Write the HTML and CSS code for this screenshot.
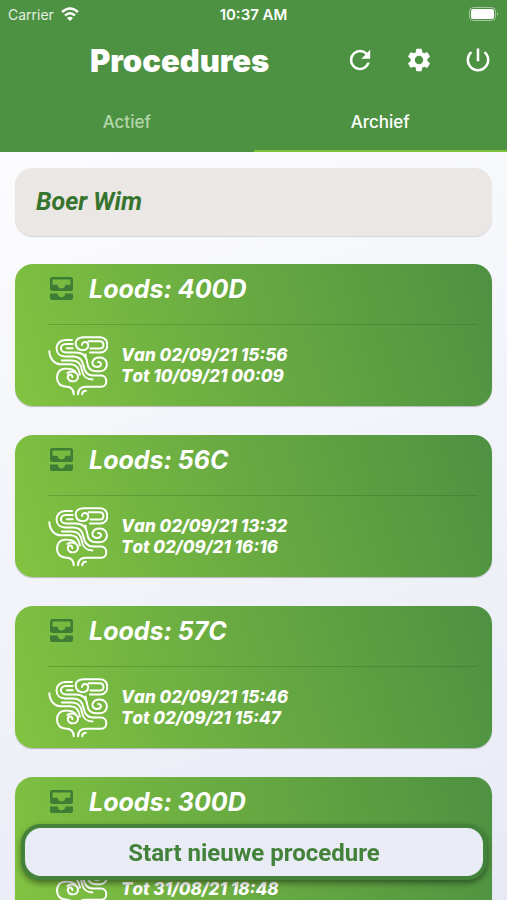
FILE: index.html
```html
<!DOCTYPE html>
<html lang="nl">

<head>
    <meta charset="UTF-8">
    <meta name="viewport" content="width=device-width, initial-scale=1.0">
    <title>Procedures</title>
    <link rel="stylesheet" href="styles.css">
</head>

<body>
    <svg class="sprite" aria-hidden="true">
        <symbol id="inbox" viewBox="3 3 18 18">
            <path fill-rule="evenodd" d="M19 3H5a2 2 0 0 0-2 2v7c0 1.100.9 2 2 2h14a2 2 0 0 0 2-2V5a2 2 0 0 0-2-2zm0 6h-4c0 1.620-1.380 3-3 3s-3-1.380-3-3H5V5h14v4zm-4 7h6v3a2 2 0 0 1-2 2H5a2 2 0 0 1-2-2v-3h6c0 1.660 1.340 3 3 3s3-1.340 3-3z"/>
        </symbol>
        <symbol id="smoke" viewBox="23 31 182 182">
            <g fill="none" stroke="currentColor" stroke-width="6" stroke-linecap="round">
                <path d="M27 77C28 101 43 117 64 117H92C109 117 117 130 120 148"/>
                <path d="M96 43H76C59 43 49 55 49 69C49 84 60 93 75 93H100C119 93 128 104 131 122C134 141 145 151 160 151H184C205 151 205 185 184 185H138C121 185 114 192 114 208"/>
                <path d="M98 55H78C57 55 57 81 78 81H106C129 81 140 94 142 112C144 130 152 138 168 138H180C209 138 209 96 180 96C153 96 151 125 171 125C187 125 188 109 175 110"/>
                <path d="M98 68H80M65 105H95C112 105 124 116 126 136C129 154 143 163 158 163M137 87V94"/>
                <path d="M150 81H182C210 81 210 35 182 35H132C112 35 104 46 108 59C113 79 143 78 145 61C146 46 126 46 126 58"/>
                <path d="M146 47H180C195 47 195 69 180 69H152"/>
                <path d="M106 139C98 129 84 130 75 130C42 130 42 184 75 184C92 184 101 191 101 208"/>
                <path d="M82 143C98 134 114 142 114 155C114 173 83 173 83 156C83 146 96 145 97 156"/>
                <path d="M127 208C127 200 130 197 138 197"/>
            </g>
        </symbol>
    </svg>

    <header class="header">
        <div class="status">
            <span class="carrier">Carrier
                <svg class="wifi" viewBox="0 0 18 14">
                    <path fill="none" stroke="currentColor" stroke-width="2.400" d="M1 5Q9-2 17 5M4 8.500Q9 4 14 8.500"/>
                    <path fill="currentColor" d="M6 11Q9 8.500 12 11L9 14z"/>
                </svg>
            </span>
            <span class="time">10:37 AM</span>
            <svg class="battery" viewBox="0 0 30 14">
                <rect x=".5" y=".5" width="26" height="13" rx="4" fill="none" stroke="currentColor" opacity=".5"/>
                <rect x="2" y="2" width="23" height="10" rx="2.500" fill="currentColor"/>
                <path d="M28 5q2 2 0 4z" fill="currentColor" opacity=".5"/>
            </svg>
        </div>
        <div class="bar">
            <h1>Procedures</h1>
            <div class="actions">
                <button type="button" aria-label="Vernieuwen">
                    <svg viewBox="1 1 22 22"><path d="M17.650 6.350A7.960 7.960 0 0 0 12 4a8 8 0 1 0 7.730 10h-2.080A6 6 0 1 1 12 6c1.660 0 3.140.690 4.220 1.780L13 11h7V4z"/></svg>
                </button>
                <button type="button" aria-label="Instellingen">
                    <svg viewBox="0 0 24 24"><path d="M19.140 12.940c.04-.3.060-.610.060-.940s-.020-.640-.070-.940l2.030-1.580a.490.490 0 0 0 .120-.610l-1.920-3.320a.490.490 0 0 0-.590-.220l-2.390.960a7 7 0 0 0-1.620-.940l-.360-2.540A.480.480 0 0 0 13.920 2.400h-3.840a.480.480 0 0 0-.480.410l-.360 2.540c-.590.240-1.130.570-1.620.940l-2.390-.960a.490.490 0 0 0-.590.220L2.740 8.870a.480.480 0 0 0 .120.610l2.030 1.580c-.05.3-.09.630-.09.940s.02.640.07.940l-2.030 1.580a.490.490 0 0 0-.120.610l1.920 3.320c.120.220.370.290.590.220l2.390-.960c.5.380 1.030.7 1.620.940l.360 2.540c.05.240.240.410.480.410h3.840c.240 0 .440-.170.470-.410l.360-2.540c.590-.240 1.130-.560 1.620-.940l2.390.960c.220.080.470 0 .590-.220l1.920-3.320a.480.480 0 0 0-.120-.610zM12 15.600a3.600 3.600 0 1 1 0-7.200 3.600 3.600 0 0 1 0 7.200z"/></svg>
                </button>
                <button type="button" aria-label="Afmelden">
                    <svg viewBox="1 1 22 22"><path d="M13 3h-2v10h2zm4.830 2.170-1.420 1.420A6.920 6.920 0 0 1 19 12a7 7 0 1 1-11.420-5.420L6.170 5.170A8.930 8.930 0 0 0 3 12a9 9 0 1 0 14.830-6.830z"/></svg>
                </button>
            </div>
        </div>
        <nav class="tabs">
            <a href="#actief">Actief</a>
            <a href="#archief" class="current">Archief</a>
        </nav>
    </header>

    <main class="list">
        <h2 class="farmer">Boer Wim</h2>

        <article class="card">
            <h3><svg><use href="#inbox"/></svg>Loods: 400D</h3>
            <div class="period">
                <svg><use href="#smoke"/></svg>
                <p>Van 02/09/21 15:56<br>Tot 10/09/21 00:09</p>
            </div>
        </article>

        <article class="card">
            <h3><svg><use href="#inbox"/></svg>Loods: 56C</h3>
            <div class="period">
                <svg><use href="#smoke"/></svg>
                <p>Van 02/09/21 13:32<br>Tot 02/09/21 16:16</p>
            </div>
        </article>

        <article class="card">
            <h3><svg><use href="#inbox"/></svg>Loods: 57C</h3>
            <div class="period">
                <svg><use href="#smoke"/></svg>
                <p>Van 02/09/21 15:46<br>Tot 02/09/21 15:47</p>
            </div>
        </article>

        <article class="card">
            <h3><svg><use href="#inbox"/></svg>Loods: 300D</h3>
            <div class="period">
                <svg><use href="#smoke"/></svg>
                <p><br>Tot 31/08/21 18:48</p>
            </div>
        </article>
    </main>

    <button type="button" class="start">Start nieuwe procedure</button>
</body>

</html>
```

FILE: styles.css
```css
* {
    margin: 0;
    padding: 0;
    box-sizing: border-box;
}

body {
    display: flex;
    flex-direction: column;
    height: 100vh;
    overflow: hidden;
    background: linear-gradient(160deg, #ffffff, #e7eaf5);
    font-family: Inter, "Liberation Sans", sans-serif;
}

button {
    border: none;
    background: none;
    cursor: pointer;
}

.sprite {
    position: absolute;
    width: 0;
    height: 0;
}

/* header */
.header {
    flex: none;
    background-color: #4d9142;
    color: #fff;
}

.status {
    display: grid;
    grid-template-columns: 1fr auto 1fr;
    align-items: center;
    height: 28px;
    padding: 0 8px;
    font-size: 14px;
}

.carrier {
    display: flex;
    align-items: center;
    gap: 7px;
    color: #e3efe1;
}

.wifi {
    width: 18px;
    height: 14px;
    color: #fff;
}

.time {
    font-size: 15px;
    font-weight: 600;
}

.battery {
    justify-self: end;
    width: 30px;
    height: 14px;
}

.bar {
    display: flex;
    justify-content: space-between;
    align-items: center;
    height: 64px;
    padding: 0 16px 0 90px;
}

.bar h1 {
    font-size: 31px;
    font-weight: 900;
}

.actions {
    display: flex;
    gap: 32px;
}

.actions button {
    width: 27px;
    height: 28px;
}

.actions svg {
    display: block;
    width: 28px;
    height: 28px;
    fill: #fff;
}

.tabs {
    display: flex;
    height: 60px;
}

.tabs a {
    flex: 1;
    border-bottom: 2px solid transparent;
    color: #b4d7a9;
    font-size: 17px;
    font-weight: 500;
    line-height: 60px;
    text-align: center;
    text-decoration: none;
}

.tabs a.current {
    border-color: #7cc13a;
    color: #fff;
}

/* list */
.list {
    flex: 1;
    min-height: 0;
    padding: 16px 15px 0;
    overflow: hidden;
}

.farmer {
    margin-bottom: 28px;
    padding: 0 21px;
    border-radius: 18px;
    background-color: #ebe7e4;
    box-shadow: 0 1px 1px rgba(0, 0, 0, .15);
    color: #37752f;
    font: italic 700 25px/68px Roboto, sans-serif;
}

.card {
    height: 142px;
    margin-bottom: 29px;
    padding: 0 15px 0 33px;
    border-radius: 18px;
    background: linear-gradient(72deg, #82c341, #4d9142);
    box-shadow: 0 1px 1px rgba(0, 0, 0, .25);
    color: #fff;
    font-style: italic;
}

.card h3 {
    display: flex;
    align-items: center;
    gap: 16px;
    height: 61px;
    padding: 0 2px 11px;
    border-bottom: 1px solid rgba(40, 100, 30, .3);
    font-size: 25px;
    font-weight: 700;
}

.card h3 svg {
    width: 23px;
    height: 23px;
    fill: #3d7d34;
}

.period {
    display: flex;
    align-items: center;
    gap: 13px;
    padding-top: 11px;
}

.period svg {
    width: 60px;
    height: 60px;
}

.period p {
    font-size: 17px;
    font-weight: 800;
    font-kerning: none;
    line-height: 21px;
}

.start {
    position: fixed;
    right: 20px;
    bottom: 20px;
    left: 21px;
    height: 56px;
    padding-top: 2px;
    border: 4px solid #43823a;
    border-radius: 20px;
    background-color: #e9ecf5;
    box-shadow: 0 3px 6px rgba(0, 0, 0, .45);
    color: #43823a;
    font: 700 24px Roboto, sans-serif;
}
```
